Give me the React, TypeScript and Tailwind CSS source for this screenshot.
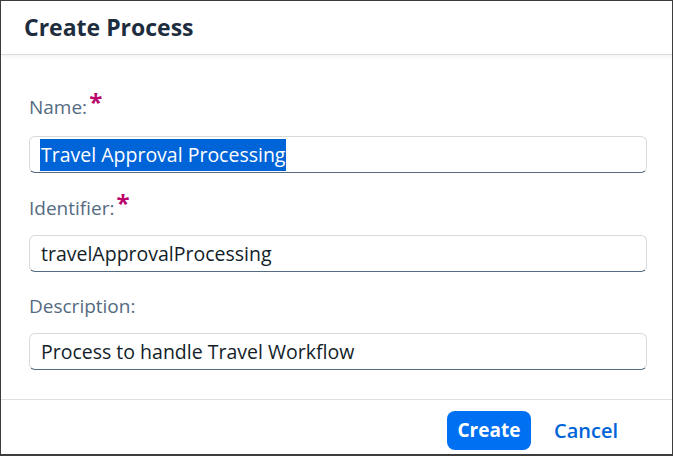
export default function App() {
  const font = { fontFamily: '"Open Sans", "Noto Sans", sans-serif' };
  return (
    <div
      className="w-[673px] h-[456px] bg-white border border-b-2 border-[#3c3c3c] flex flex-col overflow-hidden"
      style={font}
    >
      <header className="h-[54px] shrink-0 px-[23px] flex items-center border-b border-[#dcdcdc] shadow-[0_2px_4px_rgba(0,0,0,0.05)]">
        <h1 className="text-[23px] font-bold text-[#1d2d3e]">Create Process</h1>
      </header>

      <main className="flex-1 pl-[28px] pr-[25px] pt-[40px]">
        <Label text="Name:" required />
        <div className="mt-[17px] h-[37px] rounded-[6px] border border-[#d5dadd] border-b-[#556b82] bg-white flex items-center px-[10px]">
          <span className="bg-[#0064d9] text-white text-[19.5px] leading-[32px] px-[1px]">
            Travel Approval Processing
          </span>
        </div>

        <div className="mt-[23px]">
          <Label text="Identifier:" required />
        </div>
        <div className="mt-[15px] h-[37px] rounded-[6px] border border-[#d5dadd] border-b-[#556b82] bg-white flex items-center px-[11px] text-[19.5px] text-[#131e29]">
          travelApprovalProcessing
        </div>

        <div className="mt-[22px]">
          <Label text="Description:" />
        </div>
        <div className="mt-[15px] h-[37px] rounded-[6px] border border-[#d5dadd] border-b-[#556b82] bg-white flex items-center px-[11px] text-[19.5px] text-[#131e29]">
          Process to handle Travel Workflow
        </div>
      </main>

      <footer className="h-[55px] shrink-0 border-t border-[#e0e0e0] flex items-start justify-end pt-[11px] pr-[54px] gap-[23px]">
        <button className="h-[39px] w-[84px] rounded-[8px] bg-[#0070f2] text-white text-[19px] font-bold">
          Create
        </button>
        <button className="h-[39px] text-[20px] font-semibold text-[#0064d9]">Cancel</button>
      </footer>
    </div>
  );
}

function Label({ text, required }: { text: string; required?: boolean }) {
  return (
    <div className="h-[24px] flex items-center text-[19px] text-[#556b82]">
      <span>{text}</span>
      {required && (
        <span className="text-[#ba066c] text-[24px] font-bold leading-none -mt-[10px] ml-[2px]">*</span>
      )}
    </div>
  );
}
